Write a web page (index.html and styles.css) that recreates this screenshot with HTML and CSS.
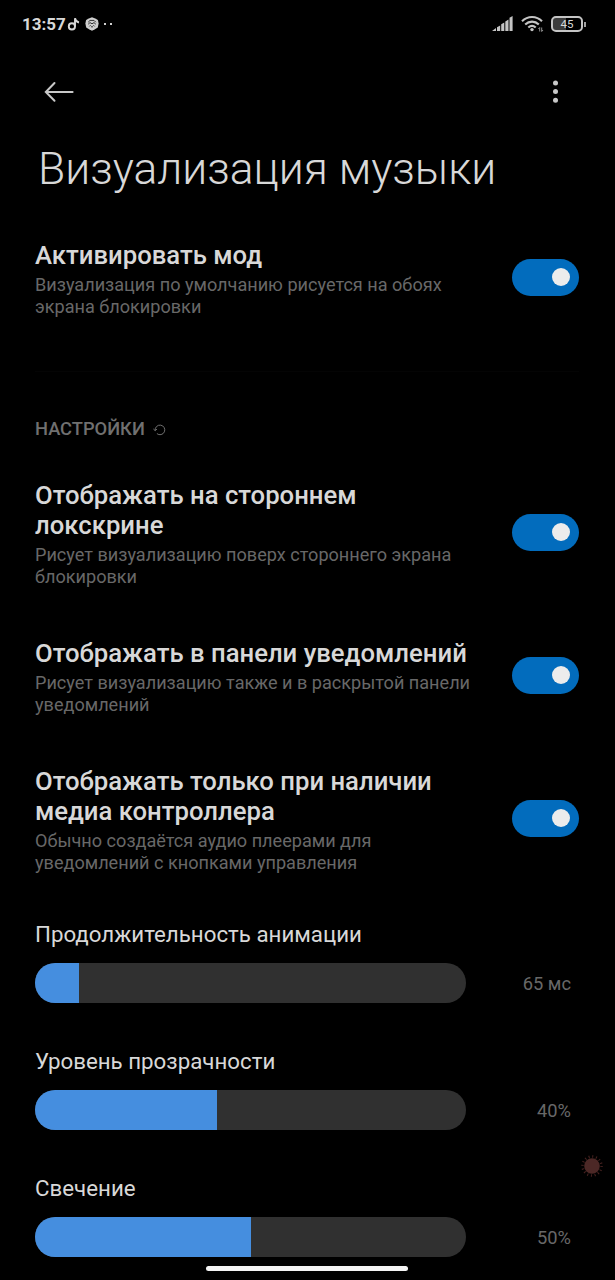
FILE: index.html
```html
<!DOCTYPE html>
<html lang="ru">
<head>
    <meta charset="UTF-8">
    <meta name="viewport" content="width=device-width, initial-scale=1.0">
    <title>Визуализация музыки</title>
    <link rel="stylesheet" href="styles.css">
</head>
<body>
    <div class="status-bar">
        <div class="status-left">
            <span class="clock">13:57</span>
            <svg class="note-icon" width="13" height="14" viewBox="0 0 13 14">
                <circle cx="4.9" cy="9.4" r="3.1" />
                <path d="M8 9.400V1.200c.4 2.300 1.600 3.800 4 4.300" />
            </svg>
            <svg class="shield-icon" width="14" height="14" viewBox="0 0 14 14">
                <path class="shield" d="M7 .3l3.2 1.1 2.7 1.5.7 3.7-.8 3.8-2.8 1.9L7 13.7l-3-1.4-2.8-1.9L.4 6.6l.7-3.7 2.7-1.5z" />
                <path class="face" d="M3.2 5.2L5 3.4h4l1.8 1.8M3.2 7.2L5 5.6l2 1.2 2-1.2 1.8 1.6M4.4 9.4l1.2-1.2M9.6 9.4L8.4 8.2M6 9.8h2" />
            </svg>
            <span class="dots"><i></i><i></i></span>
        </div>
        <div class="status-right">
            <svg width="21" height="16" viewBox="0 0 21 16" fill="#c4c4c4">
                <path d="M0 15l4-3v3zM5 11.200L8.200 9.500V15H5zM9.200 8.200L12.300 6.600V15H9.200zM13.300 5.400L16.500 3.500V15h-3.200zM17.500 1.800L20.600 0v15h-3.100z" />
            </svg>
            <svg class="wifi-icon" width="23" height="18" viewBox="0 0 23 18">
                <path d="M1 6.2c5.7-5.6 14.400-5.600 20 0M4.200 9.500c4-3.800 9.700-3.800 13.600 0M7.300 12.500c2.300-2 5.200-2 7.400 0" />
                <circle cx="11" cy="14.600" r="1.700" />
                <path class="traffic" d="M18.700 12.500v4M17.400 14l1.300-1.500M20.700 12.500v4M20.700 16.500l1.300-1.500" />
            </svg>
            <div class="battery"><span>45</span></div>
        </div>
    </div>

    <header class="app-bar">
        <svg class="back-icon" width="30" height="22" viewBox="0 0 30 22">
            <path d="M10.500 2L1.800 11l8.700 8.700M1.800 11H28.600" />
        </svg>
        <svg width="6" height="24" viewBox="0 0 6 24" fill="#c8c8c8">
            <circle cx="3.5" cy="2.900" r="2.500" />
            <circle cx="3.5" cy="11.600" r="2.500" />
            <circle cx="3.5" cy="20.300" r="2.500" />
        </svg>
    </header>

    <h1>Визуализация музыки</h1>

    <main>
        <div class="setting">
            <div class="setting-text">
                <h2>Активировать мод</h2>
                <p>Визуализация по умолчанию рисуется на обоях<br>экрана блокировки</p>
            </div>
            <div class="toggle"></div>
        </div>

        <div class="section-header">
            <span>НАСТРОЙКИ</span>
            <svg class="reset-icon" width="13" height="12" viewBox="0 0 13 12">
                <path d="M2.200 6.500a4.800 4.800 0 1 1 1.700 3.100M.4 5l1.800 1.700L4 5" />
            </svg>
        </div>

        <div class="setting">
            <div class="setting-text">
                <h2>Отображать на стороннем<br>локскрине</h2>
                <p>Рисует визуализацию поверх стороннего экрана<br>блокировки</p>
            </div>
            <div class="toggle"></div>
        </div>
        <div class="setting">
            <div class="setting-text">
                <h2>Отображать в панели уведомлений</h2>
                <p>Рисует визуализацию также и в раскрытой панели<br>уведомлений</p>
            </div>
            <div class="toggle"></div>
        </div>
        <div class="setting">
            <div class="setting-text">
                <h2>Отображать только при наличии<br>медиа контроллера</h2>
                <p>Обычно создаётся аудио плеерами для<br>уведомлений с кнопками управления</p>
            </div>
            <div class="toggle"></div>
        </div>

        <div class="sliders">
            <div class="slider">
                <label>Продолжительность анимации</label>
                <div class="slider-row">
                    <div class="track"><div class="fill" style="width: 10.1%"></div></div>
                    <span class="value">65 мс</span>
                </div>
            </div>
            <div class="slider">
                <label>Уровень прозрачности</label>
                <div class="slider-row">
                    <div class="track"><div class="fill" style="width: 42.2%"></div></div>
                    <span class="value">40%</span>
                </div>
            </div>
            <div class="slider">
                <label>Свечение</label>
                <div class="slider-row">
                    <div class="track"><div class="fill" style="width: 50%"></div></div>
                    <span class="value">50%</span>
                </div>
            </div>
        </div>
    </main>

    <svg class="touch-dot" width="24" height="24" viewBox="0 0 24 24">
        <circle class="rays" cx="12" cy="12" r="9.500" />
        <circle cx="12" cy="12" r="7.800" />
    </svg>
    <div class="home-indicator"></div>
</body>
</html>
```
FILE: styles.css
```css
:root {
    --accent: #026cbd;
    --fill: #458edf;
    --track: #303030;
    --text: #d8d8d8;
    --muted: #686868;
}

* {
    box-sizing: border-box;
}

body {
    position: relative;
    width: 615px;
    height: 1280px;
    margin: 0;
    overflow: hidden;
    background: #000;
    color: var(--text);
    font-family: Roboto, "Noto Sans", sans-serif;
}

svg {
    display: block;
}

h1, h2, p {
    margin: 0;
}

.status-bar {
    display: flex;
    justify-content: space-between;
    align-items: center;
    height: 48px;
    padding: 0 29px 0 22px;
}

.status-left,
.status-right {
    display: flex;
    align-items: center;
}

.clock {
    width: 45px;
    font-size: 17px;
    font-weight: 700;
    white-space: nowrap;
}

.note-icon {
    fill: none;
    stroke: #d8d8d8;
    stroke-width: 1.9;
}

.shield-icon {
    margin-left: 5px;
}

.shield {
    fill: #d0d0d0;
}

.face {
    fill: none;
    stroke: #333;
    stroke-width: 1;
}

.dots {
    display: flex;
    gap: 4px;
    margin-left: 5px;
}

.dots i {
    width: 2px;
    height: 2px;
    background: #d0d0d0;
}

.wifi-icon {
    margin-left: 8px;
    fill: none;
    stroke: #c4c4c4;
    stroke-width: 2.1;
}

.wifi-icon circle {
    fill: #c4c4c4;
    stroke: none;
}

.wifi-icon .traffic {
    stroke: #909090;
    stroke-width: 1;
}

.battery {
    position: relative;
    width: 32px;
    height: 16px;
    margin: 0 3px 0 7px;
    border: 2px solid #c4c4c4;
    border-radius: 5px;
    background: linear-gradient(to right, #3c3c3c 45%, #000 45%);
    font-size: 11.5px;
    line-height: 13px;
    text-align: center;
}

.battery::after {
    content: "";
    position: absolute;
    top: 4px;
    right: -5px;
    width: 2px;
    height: 5px;
    background: #a0a0a0;
}

.app-bar {
    display: flex;
    justify-content: space-between;
    align-items: center;
    height: 87px;
    padding: 0 57px 0 44px;
}

.back-icon {
    fill: none;
    stroke: #c8c8c8;
    stroke-width: 2;
    stroke-linecap: round;
}

h1 {
    height: 68px;
    padding-left: 38px;
    font-size: 44.4px;
    font-weight: 300;
    line-height: 68px;
    white-space: nowrap;
}

main {
    padding: 37px 36px 0 35px;
}

.setting {
    display: flex;
    justify-content: space-between;
    align-items: center;
    margin-bottom: 51px;
}

.setting-text {
    white-space: nowrap;
}

.setting h2 {
    font-size: 25.7px;
    font-weight: 500;
    line-height: 30px;
}

.setting p {
    margin-top: 4px;
    color: var(--muted);
    font-size: 18.1px;
    line-height: 21.5px;
}

.toggle {
    display: flex;
    justify-content: flex-end;
    align-items: center;
    width: 67px;
    height: 37px;
    margin-bottom: 3px;
    padding-right: 9px;
    border-radius: 19px;
    background: var(--accent);
}

.toggle::after {
    content: "";
    width: 18px;
    height: 18px;
    border-radius: 50%;
    background: #ececec;
}

.section-header {
    display: flex;
    align-items: center;
    height: 109px;
    margin-top: 54px;
    padding-top: 5px;
    border-top: 1px solid #040404;
    color: #707070;
    font-size: 18.3px;
    font-weight: 500;
}

.setting:first-child {
    margin-bottom: 0;
}

.reset-icon {
    margin: 3px 0 0 8px;
    fill: none;
    stroke: #707070;
    stroke-width: 1;
}

.sliders {
    margin-top: -4px;
}

.slider {
    height: 127px;
}

.slider label {
    display: block;
    height: 43px;
    font-size: 22.3px;
    line-height: 28px;
}

.slider-row {
    display: flex;
    align-items: center;
    justify-content: space-between;
    padding-right: 8px;
}

.track {
    width: 431px;
    height: 40px;
    border-radius: 20px;
    background: var(--track);
    overflow: hidden;
}

.fill {
    height: 100%;
    background: var(--fill);
}

.value {
    color: var(--muted);
    font-size: 18.3px;
}

.touch-dot {
    position: absolute;
    top: 1154px;
    left: 580px;
    fill: #4c2826;
}

.touch-dot .rays {
    fill: none;
    stroke: #482220;
    stroke-width: 2.5;
    stroke-dasharray: 1 2.730;
}

.home-indicator {
    position: absolute;
    top: 1266px;
    left: 206px;
    width: 202px;
    height: 5px;
    border-radius: 3px;
    background: #f4f4f4;
}
```
